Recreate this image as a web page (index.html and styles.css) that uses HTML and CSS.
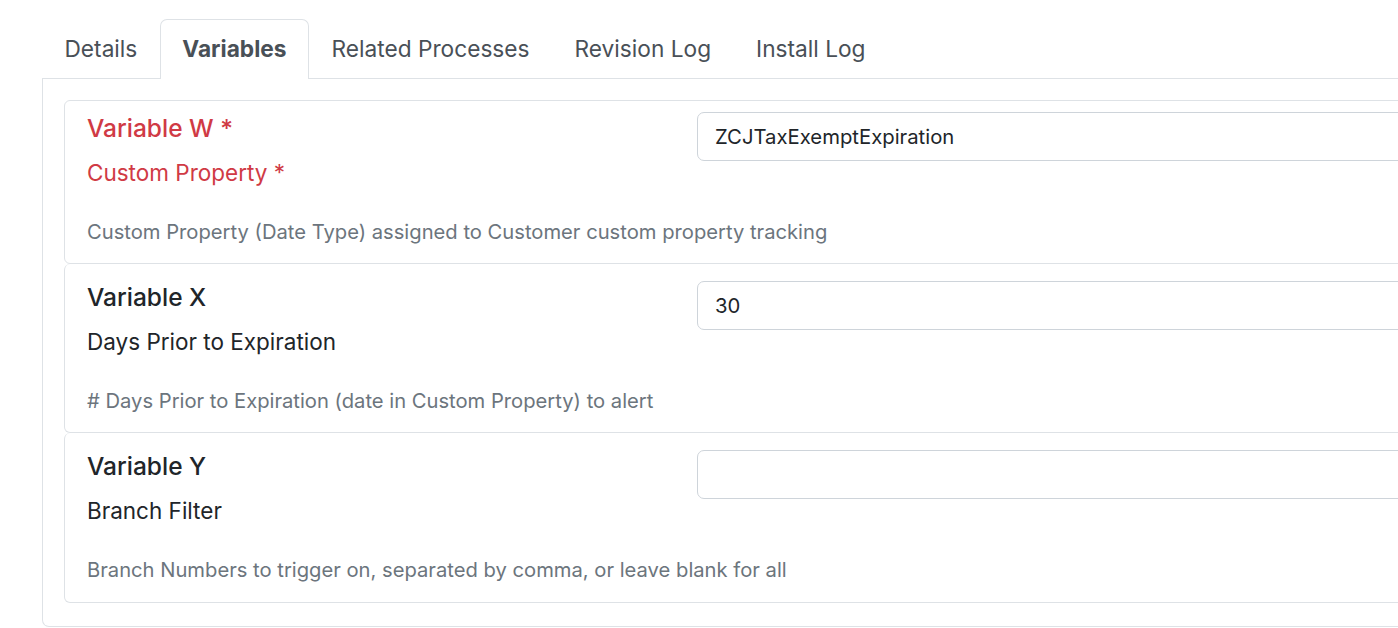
FILE: index.html
```html
<!DOCTYPE html>
<html lang="en">
<head>
<meta charset="utf-8">
<title>Variables</title>
<link rel="stylesheet" href="styles.css">
</head>
<body>
<div class="page">
  <ul class="tabs">
    <li class="tab">Details</li>
    <li class="tab active">Variables</li>
    <li class="tab">Related Processes</li>
    <li class="tab">Revision Log</li>
    <li class="tab">Install Log</li>
  </ul>
  <div class="panel">
    <div class="var-card first">
      <div class="var-row">
        <div class="var-left">
          <div class="var-title required">Variable W *</div>
          <div class="var-label required">Custom Property *</div>
        </div>
        <div class="var-right">
          <div class="input">ZCJTaxExemptExpiration</div>
        </div>
      </div>
      <div class="var-desc">Custom Property (Date Type) assigned to Customer custom property tracking</div>
    </div>
    <div class="var-card">
      <div class="var-row">
        <div class="var-left">
          <div class="var-title">Variable X</div>
          <div class="var-label">Days Prior to Expiration</div>
        </div>
        <div class="var-right">
          <div class="input">30</div>
        </div>
      </div>
      <div class="var-desc"># Days Prior to Expiration (date in Custom Property) to alert</div>
    </div>
    <div class="var-card">
      <div class="var-row">
        <div class="var-left">
          <div class="var-title">Variable Y</div>
          <div class="var-label">Branch Filter</div>
        </div>
        <div class="var-right">
          <div class="input"></div>
        </div>
      </div>
      <div class="var-desc">Branch Numbers to trigger on, separated by comma, or leave blank for all</div>
    </div>
  </div>
</div>
</body>
</html>
```

FILE: styles.css
```css
html, body {
  margin: 0;
  padding: 0;
  background: #fff;
  overflow: hidden;
}
body {
  font-family: "Inter", "Liberation Sans", sans-serif;
  color: #212529;
}
.page {
  padding: 19px 0 0 42px;
  width: 1600px;
}
.tabs {
  list-style: none;
  margin: 0;
  padding: 0;
  display: flex;
  border-bottom: 1px solid #dee2e6;
}
.tab {
  font-size: 22.7px;
  line-height: 34px;
  padding: 12px 21.5px;
  color: #495057;
  border: 1px solid transparent;
  border-bottom: none;
  border-radius: 7px 7px 0 0;
}
.tab.active {
  font-weight: 700;
  border-color: #dee2e6;
  background: #fff;
  margin-bottom: -1px;
  padding-bottom: 13px;
}
.panel {
  border: 1px solid #dee2e6;
  border-top: none;
  border-radius: 0 0 7px 7px;
  padding: 21px 21px 23px 21px;
}
.var-card {
  border: 1px solid #dee2e6;
  border-top: none;
  border-radius: 6px;
  padding: 17px 22px 16px 22px;
}
.var-card.first {
  border-top: 1px solid #dee2e6;
  padding-top: 11px;
}
.var-card:last-child {
  padding-bottom: 17px;
}
.var-row {
  display: grid;
  grid-template-columns: 610px 1fr;
}
.var-title {
  font-size: 24.5px;
  line-height: 33px;
  font-weight: 500;
}
.var-label {
  font-size: 22.5px;
  line-height: 33px;
  margin-top: 11px;
}
.required {
  color: #d03a45;
}
.input {
  height: 47px;
  border: 1px solid #ced4da;
  border-radius: 7px;
  padding: 0 17px;
  font-size: 20.3px;
  line-height: 47px;
  color: #212529;
}
.var-desc {
  margin-top: 28px;
  font-size: 20.2px;
  line-height: 30px;
  color: #6c757d;
}
```
